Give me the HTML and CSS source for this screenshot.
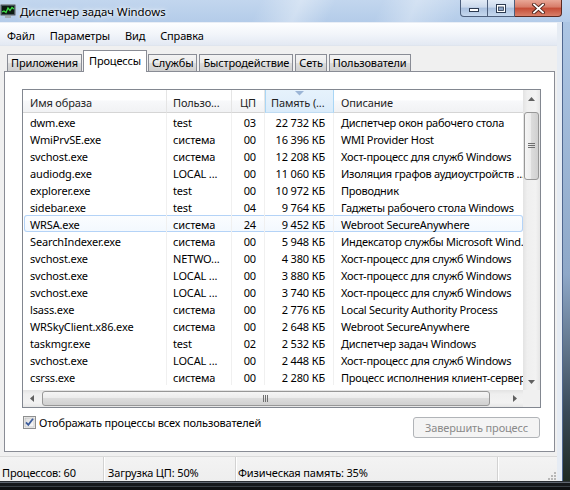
FILE: index.html
```html
<!DOCTYPE html>
<html>
<head>
<meta charset="utf-8">
<title>Диспетчер задач Windows</title>
<link rel="stylesheet" href="styles.css">
</head>
<body>
<div class="window">
  <div class="titlebar">
    <svg class="app-icon" width="16" height="16" viewBox="0 0 16 16">
      <rect x="0.5" y="1.5" width="15" height="11" rx="1" fill="#46525c" stroke="#8d979f"/>
      <rect x="2" y="3" width="12" height="8" fill="#0c1a10"/>
      <polyline points="2,9 4,8 6,9.5 8,5 10,7.5 12,4.5 14,6" fill="none" stroke="#3ee048" stroke-width="1.3"/>
      <rect x="5" y="13" width="6" height="2" fill="#a2abb2"/>
    </svg>
    <span class="title">Диспетчер задач Windows</span>
    <div class="caption">
      <div class="cbtn min"><svg width="10" height="8" viewBox="0 0 10 8"><rect x="0.5" y="4.5" width="9" height="3" fill="#fff" stroke="#2c3a50"/></svg></div>
      <div class="cbtn max"><svg width="10" height="9" viewBox="0 0 10 9"><rect x="0.5" y="0.5" width="9" height="8" fill="#fff" stroke="#2c3a50"/><rect x="2.5" y="3" width="5" height="3.5" fill="#8aa2c4" stroke="#2c3a50" stroke-width="0.8"/></svg></div>
      <div class="cbtn close"><svg width="13" height="11" viewBox="0 0 13 11"><path d="M2 1.5 L11 9.5 M11 1.5 L2 9.5" stroke="#4a2018" stroke-width="3.6" stroke-linecap="square"/><path d="M2 1.5 L11 9.5 M11 1.5 L2 9.5" stroke="#fff" stroke-width="1.8" stroke-linecap="square"/></svg></div>
    </div>
  </div>
  <div class="middle">
    <div class="client">
      <div class="menubar">
        <span class="mi">Файл</span>
        <span class="mi">Параметры</span>
        <span class="mi">Вид</span>
        <span class="mi">Справка</span>
      </div>
      <div class="tabs">
        <div class="tab">Приложения</div>
        <div class="tab active">Процессы</div>
        <div class="tab">Службы</div>
        <div class="tab">Быстродействие</div>
        <div class="tab">Сеть</div>
        <div class="tab">Пользователи</div>
      </div>
      <div class="panel">
        <div class="listview">
          <div class="lv-main">
            <div class="lv-table">
              <div class="lv-head">
                <div class="hc c1">Имя образа</div>
                <div class="hc c2">Пользо...</div>
                <div class="hc c3">ЦП</div>
                <div class="hc c4 sorted"><svg class="sort-arrow" width="9" height="5" viewBox="0 0 9 5"><polygon points="0,0 9,0 4.5,4.5" fill="#9bb5d6"/></svg>Память (...</div>
                <div class="hc c5">Описание</div>
              </div>
              <div class="lv-body">
                <div class="r"><div class="c c1">dwm.exe</div><div class="c c2">test</div><div class="c c3">03</div><div class="c c4">22 732 КБ</div><div class="c c5">Диспетчер окон рабочего стола</div></div>
                <div class="r"><div class="c c1">WmiPrvSE.exe</div><div class="c c2">система</div><div class="c c3">00</div><div class="c c4">16 396 КБ</div><div class="c c5">WMI Provider Host</div></div>
                <div class="r"><div class="c c1">svchost.exe</div><div class="c c2">система</div><div class="c c3">00</div><div class="c c4">12 208 КБ</div><div class="c c5">Хост-процесс для служб Windows</div></div>
                <div class="r"><div class="c c1">audiodg.exe</div><div class="c c2">LOCAL ...</div><div class="c c3">00</div><div class="c c4">11 060 КБ</div><div class="c c5">Изоляция графов аудиоустройств ...</div></div>
                <div class="r"><div class="c c1">explorer.exe</div><div class="c c2">test</div><div class="c c3">00</div><div class="c c4">10 972 КБ</div><div class="c c5">Проводник</div></div>
                <div class="r"><div class="c c1">sidebar.exe</div><div class="c c2">test</div><div class="c c3">04</div><div class="c c4">9 764 КБ</div><div class="c c5">Гаджеты рабочего стола Windows</div></div>
                <div class="r hot"><div class="c c1">WRSA.exe</div><div class="c c2">система</div><div class="c c3">24</div><div class="c c4">9 452 КБ</div><div class="c c5">Webroot SecureAnywhere</div></div>
                <div class="r"><div class="c c1">SearchIndexer.exe</div><div class="c c2">система</div><div class="c c3">00</div><div class="c c4">5 948 КБ</div><div class="c c5">Индексатор службы Microsoft Wind...</div></div>
                <div class="r"><div class="c c1">svchost.exe</div><div class="c c2">NETWO...</div><div class="c c3">00</div><div class="c c4">4 380 КБ</div><div class="c c5">Хост-процесс для служб Windows</div></div>
                <div class="r"><div class="c c1">svchost.exe</div><div class="c c2">LOCAL ...</div><div class="c c3">00</div><div class="c c4">3 880 КБ</div><div class="c c5">Хост-процесс для служб Windows</div></div>
                <div class="r"><div class="c c1">svchost.exe</div><div class="c c2">LOCAL ...</div><div class="c c3">00</div><div class="c c4">3 740 КБ</div><div class="c c5">Хост-процесс для служб Windows</div></div>
                <div class="r"><div class="c c1">lsass.exe</div><div class="c c2">система</div><div class="c c3">00</div><div class="c c4">2 776 КБ</div><div class="c c5">Local Security Authority Process</div></div>
                <div class="r"><div class="c c1">WRSkyClient.x86.exe</div><div class="c c2">система</div><div class="c c3">00</div><div class="c c4">2 648 КБ</div><div class="c c5">Webroot SecureAnywhere</div></div>
                <div class="r"><div class="c c1">taskmgr.exe</div><div class="c c2">test</div><div class="c c3">02</div><div class="c c4">2 532 КБ</div><div class="c c5">Диспетчер задач Windows</div></div>
                <div class="r"><div class="c c1">svchost.exe</div><div class="c c2">LOCAL ...</div><div class="c c3">00</div><div class="c c4">2 448 КБ</div><div class="c c5">Хост-процесс для служб Windows</div></div>
                <div class="r"><div class="c c1">csrss.exe</div><div class="c c2">система</div><div class="c c3">00</div><div class="c c4">2 280 КБ</div><div class="c c5">Процесс исполнения клиент-сервер</div></div>
              </div>
            </div>
            <div class="vscroll">
              <div class="sb-btn"><svg width="7" height="4" viewBox="0 0 7 4"><polygon points="0,4 3.5,0 7,4" fill="#606060"/></svg></div>
              <div class="vtrack">
                <div class="vthumb"><svg width="7" height="6" viewBox="0 0 7 6"><path d="M0 0.5H7M0 2.5H7M0 4.5H7" stroke="#6f6f6f" stroke-width="1"/></svg></div>
              </div>
              <div class="sb-btn"><svg width="7" height="4" viewBox="0 0 7 4"><polygon points="0,0 7,0 3.5,4" fill="#606060"/></svg></div>
            </div>
          </div>
          <div class="lv-bottom">
            <div class="hscroll">
              <div class="sb-btn"><svg width="4" height="7" viewBox="0 0 4 7"><polygon points="4,0 4,7 0,3.5" fill="#606060"/></svg></div>
              <div class="htrack">
                <div class="hthumb"><svg width="6" height="7" viewBox="0 0 6 7"><path d="M0.5 0V7M2.5 0V7M4.5 0V7" stroke="#6f6f6f" stroke-width="1"/></svg></div>
              </div>
              <div class="sb-btn"><svg width="4" height="7" viewBox="0 0 4 7"><polygon points="0,0 0,7 4,3.5" fill="#606060"/></svg></div>
            </div>
            <div class="corner"></div>
          </div>
        </div>
        <div class="controls">
          <label class="chk">
            <svg width="13" height="13" viewBox="0 0 13 13">
              <defs><linearGradient id="cb" x1="0" y1="0" x2="1" y2="1"><stop offset="0" stop-color="#dcdcdc"/><stop offset="1" stop-color="#fbfbfb"/></linearGradient></defs>
              <rect x="0.5" y="0.5" width="12" height="12" fill="#f4f4f4" stroke="#8e8f8f"/>
              <rect x="2" y="2" width="9" height="9" fill="url(#cb)" stroke="#b5b5b5" stroke-width="0.6"/>
              <path d="M3 6.3 L5.3 8.8 L10 2.8" fill="none" stroke="#3d5d9c" stroke-width="1.8"/>
            </svg>
            <span>Отображать процессы всех пользователей</span>
          </label>
          <div class="btn">Завершить процесс</div>
        </div>
      </div>
      <div class="statusbar">
        <div class="sec s1">Процессов: 60</div>
        <div class="sec s2">Загрузка ЦП: 50%</div>
        <div class="sec s3">Физическая память: 35%</div>
        <div class="sec s4">
          <svg class="grip" width="9" height="9" viewBox="0 0 9 9">
            <g fill="#b8b8b8"><rect x="7" y="1" width="2" height="2"/><rect x="4" y="4" width="2" height="2"/><rect x="7" y="4" width="2" height="2"/><rect x="1" y="7" width="2" height="2"/><rect x="4" y="7" width="2" height="2"/><rect x="7" y="7" width="2" height="2"/></g>
          </svg>
        </div>
      </div>
    </div>
    <div class="rframe"></div>
  </div>
  <div class="bframe"></div>
</div>
</body>
</html>
```

FILE: styles.css
```css
* { box-sizing: border-box; }

body {
  margin: 0;
  width: 570px;
  height: 490px;
  overflow: hidden;
  background: #1b1f24;
  font-family: "Noto Sans", "Open Sans", "Liberation Sans", sans-serif;
  font-size: 11px;
  letter-spacing: -0.15px;
  color: #000;
}

.window {
  width: 570px;
  height: 490px;
  display: flex;
  flex-direction: column;
}

/* Title bar */
.titlebar {
  height: 22px;
  flex: none;
  display: flex;
  align-items: flex-start;
  background:
    linear-gradient(115deg, rgba(255,255,255,0) 45%, rgba(255,255,255,0.35) 52%, rgba(255,255,255,0) 58%, rgba(255,255,255,0) 66%, rgba(255,255,255,0.3) 72%, rgba(255,255,255,0) 80%),
    linear-gradient(180deg, #c2d6ee, #b4cce9);
}
.app-icon { flex: none; margin-top: 3px; }
.title {
  margin-left: 4px;
  line-height: 23px;
  font-size: 11.4px;
  letter-spacing: 0;
  text-shadow: 0 0 6px #fff, 0 0 3px #fff;
  white-space: nowrap;
}
.caption {
  margin-left: auto;
  margin-right: 8px;
  display: flex;
}
.cbtn {
  height: 17px;
  border: 1px solid #4d5f7c;
  border-top: none;
  display: flex;
  align-items: center;
  justify-content: center;
  background: linear-gradient(180deg, #e2ebf6 0%, #cbd9ec 45%, #aac0de 50%, #c6d8ee 100%);
}
.cbtn.min { width: 28px; border-radius: 0 0 0 4px; }
.cbtn.max { width: 27px; border-left: none; }
.cbtn.close {
  width: 47px;
  border-left: none;
  border-color: #5b2a22;
  border-radius: 0 0 4px 0;
  background: linear-gradient(180deg, #e9a797 0%, #d77b68 45%, #c44b35 50%, #d9806a 100%);
}

/* Middle */
.middle {
  flex: 1;
  display: flex;
  min-height: 0;
}
.client {
  width: 557px;
  flex: none;
  background: #f0f0f0;
  display: flex;
  flex-direction: column;
}
.rframe {
  flex: 1;
  background:
    linear-gradient(90deg, #e6ecf4 0 5px, #506890 5px 6px, rgba(0,0,0,0) 6px),
    linear-gradient(180deg, #adc6e4 0%, #8ea8c8 55%, #3a4a58 85%, #1f2a22 100%);
}
.bframe {
  height: 9px;
  flex: none;
  background: linear-gradient(180deg, #2a2e33 0 1px, #5e6670 1px 2px, #15181b 2px 5px, #3a4046 5px 6px, #0e1012 6px);
}

/* Menu */
.menubar {
  height: 24px;
  flex: none;
  display: flex;
  align-items: center;
  padding-top: 3px;
  background: linear-gradient(180deg, #fdfeff 0%, #f2f5fa 50%, #e3e9f3 100%);
  border-top: 1px solid #e9eef6;
  border-bottom: 1px solid #dfe5ee;
}
.mi {
  padding: 0 7px;
  margin-right: 1px;
  white-space: nowrap;
}

/* Tabs */
.tabs {
  height: 25px;
  flex: none;
  display: flex;
  align-items: flex-end;
  gap: 2px;
  padding-left: 7px;
  position: relative;
  z-index: 1;
}
.tab {
  height: 17px;
  line-height: 16px;
  padding: 0 3px;
  border: 1px solid #898c95;
  border-bottom: none;
  white-space: nowrap;
  background: linear-gradient(180deg, #f3f3f3 0%, #ebebeb 50%, #dddddd 50%, #cfcfcf 100%);
}
.tab.active {
  height: 22px;
  margin: 0 -1px -1px;
  padding: 0 5px 2px;
  line-height: 20px;
  background: #fff;
}

/* Panel */
.panel {
  margin-left: 4px;
  width: 551px;
  height: 381px;
  flex: none;
  border: 1px solid #898c95;
  background: #fff;
  padding: 17px 0 0 17px;
}

.listview {
  width: 519px;
  height: 319px;
  border: 1px solid #828790;
  display: flex;
  flex-direction: column;
}
.lv-main {
  height: 300px;
  flex: none;
  display: flex;
}
.lv-table {
  width: 500px;
  flex: none;
  overflow: hidden;
}
.lv-head, .r {
  display: grid;
  grid-template-columns: 144px 65px 33px 69px 189px;
}
.lv-head { height: 23px; }
.hc {
  position: relative;
  line-height: 25px;
  white-space: nowrap;
  overflow: hidden;
  border-right: 1px solid #e5e5e5;
  border-bottom: 1px solid #d5d5d5;
  background: linear-gradient(180deg, #ffffff 0%, #ffffff 45%, #f7f8fa 50%, #f1f2f4 100%);
  color: #1f1f1f;
}
.hc.sorted {
  background: linear-gradient(180deg, #e6f2fc 0%, #e1effb 50%, #d9ebfa 100%);
  border-left: 1px solid #a9d6f5;
  border-right: 1px solid #a9d6f5;
  border-bottom-color: #c0dcf2;
}
.sort-arrow {
  position: absolute;
  left: 29px;
  top: 1px;
}
.lv-body {
  height: 277px;
  overflow: hidden;
}
.r {
  height: 17px;
  line-height: 19px;
}
.c {
  white-space: nowrap;
  overflow: hidden;
  border-right: 1px solid #f0f0f0;
}
.c1 { padding-left: 7px; }
.c2 { padding-left: 6px; }
.c3 { text-align: right; padding-right: 8px; }
.c4 { text-align: right; padding-right: 8px; }
.hc.c4 { text-align: left; padding-left: 5px; padding-right: 0; }
.c5 { padding-left: 7px; border-right: none; }
.r .c5 { letter-spacing: -0.25px; }
.r.hot {
  margin-left: 1px;
  border-radius: 3px;
  box-shadow: inset 0 0 0 1px #b4d3f7;
  background: linear-gradient(180deg, #fbfdff, #f3f8fe);
  grid-template-columns: 143px 65px 33px 69px 189px;
}
.r.hot .c1 { padding-left: 6px; }

/* Scrollbars */
.vscroll {
  width: 17px;
  flex: none;
  display: flex;
  flex-direction: column;
  background: linear-gradient(90deg, #e3e3e3 0%, #efefef 25%, #f2f2f2 75%, #e6e6e6 100%);
}
.sb-btn {
  width: 17px;
  height: 17px;
  flex: none;
  display: flex;
  align-items: center;
  justify-content: center;
}
.vtrack {
  flex: 1;
  padding-top: 5px;
}
.vthumb {
  height: 68px;
  margin: 0 1px;
  border: 1px solid #979797;
  border-radius: 3px;
  background: linear-gradient(90deg, #f5f5f5 0%, #ececec 45%, #dcdcdc 50%, #d0d0d0 100%);
  display: flex;
  align-items: center;
  justify-content: center;
}
.lv-bottom {
  height: 17px;
  flex: none;
  display: flex;
}
.hscroll {
  width: 500px;
  flex: none;
  display: flex;
  background: linear-gradient(180deg, #e3e3e3 0%, #efefef 25%, #f2f2f2 75%, #e6e6e6 100%);
}
.htrack {
  flex: 1;
  padding-left: 2px;
}
.hthumb {
  width: 448px;
  height: 15px;
  margin-top: 1px;
  border: 1px solid #979797;
  border-radius: 3px;
  background: linear-gradient(180deg, #f5f5f5 0%, #ececec 45%, #dcdcdc 50%, #d0d0d0 100%);
  display: flex;
  align-items: center;
  justify-content: center;
}
.corner {
  flex: 1;
  background: #f0f0f0;
}

/* Controls */
.controls {
  width: 519px;
  margin-top: 8px;
  display: flex;
  justify-content: space-between;
  align-items: flex-start;
}
.chk {
  display: flex;
  align-items: center;
  gap: 3px;
  height: 13px;
  margin-left: 1px;
  white-space: nowrap;
}
.btn {
  width: 127px;
  height: 21px;
  margin-top: 1px;
  margin-right: 1px;
  border: 1px solid #b1b4b8;
  border-radius: 3px;
  background: #f4f4f4;
  color: #8a8a8a;
  text-align: center;
  line-height: 20px;
  white-space: nowrap;
}

/* Status bar */
.statusbar {
  margin-top: 4px;
  height: 25px;
  flex: none;
  display: flex;
  border-top: 1px solid #dadada;
  background: linear-gradient(180deg, #f3f3f3, #eeeeee);
}
.sec {
  height: 100%;
  padding-top: 5px;
  line-height: 21px;
  white-space: nowrap;
  border-right: 1px solid #d2d2d2;
  box-shadow: 1px 0 0 #ffffff;
}
.s1 { width: 104px; padding-left: 2px; }
.s2 { width: 132px; padding-left: 4px; }
.s3 { width: 262px; padding-left: 2px; }
.s4 {
  flex: 1;
  border-right: none;
  box-shadow: none;
  display: flex;
  justify-content: flex-end;
  align-items: flex-end;
  padding: 0 1px 1px 0;
}
```
